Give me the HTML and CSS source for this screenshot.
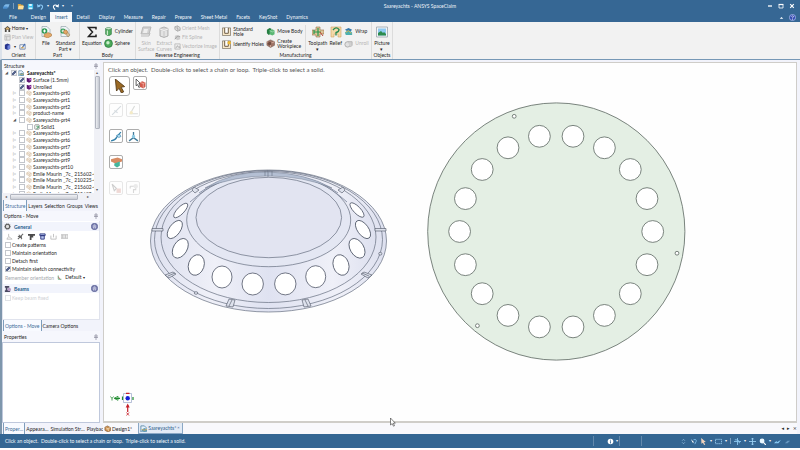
FILE: index.html
```html
<!DOCTYPE html>
<html lang="en">
<head>
<meta charset="utf-8">
<title>Saareyachts - ANSYS SpaceClaim</title>
<link rel="stylesheet" href="styles.css">
</head>
<body>
<svg class="defs" aria-hidden="true">
  <symbol id="part" viewBox="0 0 8 8"><path d="M1 2.500l2.500-1.500 3.500 2-.3 3.500L4.500 7.500 3 5.500 1 5z" fill="#f8efe4" stroke="#cdb69b" stroke-width=".7"/><path d="M1 2.500l3.500 1.700L7 3M4.500 4.200v3" fill="none" stroke="#cdb69b" stroke-width=".7"/></symbol>
  <symbol id="surface" viewBox="0 0 8 8"><path d="M1 1l3 1 3-1v5l-3 1.500L1 6z" fill="#5c1470"/><path d="M4.500 3L7 2v2L4.500 5z" fill="#c56ad0"/></symbol>
  <symbol id="solid" viewBox="0 0 8 8"><rect x="1" y="1" width="6" height="6" rx="1" fill="#fff" stroke="#666" stroke-width=".8"/><path d="M3 3h3v2H4v2" fill="none" stroke="#2d8a52"/></symbol>
  <symbol id="design" viewBox="0 0 8 8"><path d="M1 1h4l2 2v5H1z" fill="#e8f2fa" stroke="#3f7298" stroke-width=".8"/><path d="M2 5l3-1.500L8 5v2L5 8 2 7z" fill="#5d9bb7"/><path d="M2 5l3 1 3-1" stroke="#d9b25a" fill="none"/></symbol>
  <symbol id="up" viewBox="0 0 8 8"><circle cx="4" cy="4" r="3.600" fill="#8388b8" stroke="#50568c" stroke-width=".8"/><path d="M2.300 4L4 2.400 5.700 4M2.300 6L4 4.400 5.700 6" stroke="#fff" fill="none" stroke-width=".8"/></symbol>
  <symbol id="cursor" viewBox="0 0 10 12"><path d="M1 0l8 7-3.500.4L8 11l-2 1-2-4-2.500 2z"/></symbol>
</svg>

<div class="app">
  <header class="titlebar">
    <div class="caption">
      <div class="quick">
        <button aria-label="Application menu"><svg viewBox="0 0 8 8"><path d="M1 3l2-1.500h4.500L6 5H1z" fill="#7eb8e8"/><path d="M0 4h5v2.500H0z" fill="#4c91d0"/></svg></button>
        <i class="bar"></i>
        <button aria-label="Open"><svg viewBox="0 0 8 8"><path d="M1 1h3l1 1h2v5H1z" fill="#d9a441"/><path d="M2 3h6L7 7H1z" fill="#ffe09a"/></svg></button>
        <button aria-label="Save"><svg viewBox="0 0 8 8"><path d="M1 1h6v6H1z" fill="#3fc1ef"/><path d="M2.500 1h3v2.500h-3zM2 5h4v2H2z" fill="#d9f5ff"/></svg></button>
        <button aria-label="Undo"><svg viewBox="0 0 8 8"><path d="M2 3.500C4 1 7.500 3 6 5.500L4.500 7.500" stroke="#8cc9f5" stroke-width="1.300" fill="none"/><path d="M0 1l.5 4L4 4z" fill="#8cc9f5"/></svg></button>
        <small>▾</small>
        <button aria-label="Redo"><svg viewBox="0 0 8 8"><path d="M6 3.500C4 1 .5 3 2 5.500L3.500 7.500" stroke="#fff" stroke-width="1.300" fill="none"/><path d="M8 1l-.5 4L4 4z" fill="#fff"/></svg></button>
        <small>▾</small><small class="more">▾</small>
      </div>
      <h1>Saareyachts - ANSYS SpaceClaim</h1>
      <div class="winbtns">
        <button aria-label="Minimize"><svg viewBox="0 0 6 6"><path d="M1 3h4" stroke="#fff" stroke-width="1.300"/></svg></button>
        <button aria-label="Maximize"><svg viewBox="0 0 6 6"><path d="M1 1.500h4v3.500H1z" stroke="#fff" fill="none" stroke-width=".8"/><path d="M.6 1.500h4.800" stroke="#fff" stroke-width="1.200"/></svg></button>
        <button aria-label="Close"><svg viewBox="0 0 6 6"><path d="M1.200 1.200l3.600 3.600M4.800 1.200L1.200 4.800" stroke="#fff" stroke-width="1.200"/></svg></button>
      </div>
    </div>
    <nav class="tabs">
      <button class="file">File</button><button>Design</button><button class="active">Insert</button><button>Detail</button><button>Display</button><button>Measure</button><button>Repair</button><button>Prepare</button><button>Sheet Metal</button><button>Facets</button><button>KeyShot</button><button>Dynamics</button>
      <span class="help"><button aria-label="Collapse ribbon"><svg viewBox="0 0 6 6"><path d="M1.500 4L3 2.500 4.500 4z" fill="#fff"/></svg></button><button aria-label="Help"><svg viewBox="0 0 8 8"><circle cx="4" cy="4" r="3.500" fill="#3349b0" stroke="#b9c8f5" stroke-width=".8"/><path d="M2.700 3Q4 1.300 5.200 2.800 5 4 4 4.300V5M4 5.600v1" stroke="#fff" stroke-width=".8" fill="none"/></svg></button></span>
    </nav>
  </header>

  <section class="ribbon" aria-label="Insert">
    <div class="group orient">
      <div class="tools"><div class="stack">
        <button class="row"><svg viewBox="0 0 8 8"><path d="M0 4.500L4 1l4 3.500H7V8H5V5.500H3V8H1V4.500z" fill="#4c4943"/><path d="M2 4l2-1.800L6 4v1H2z" fill="#d9b16c"/></svg>Home <small>▾</small></button>
        <button class="row off" disabled><svg viewBox="0 0 8 8"><path d="M1 1h6v6H1zM1 3h6M3 3v4" fill="#e6e6e6" stroke="#bbb"/></svg>Plan View</button>
        <div class="row pair"><button aria-label="Spin"><svg viewBox="0 0 8 8"><path d="M1 2l3-1.500L7 2v4.500L4 8 1 6.500z" fill="#26348e"/><path d="M4 3l3-1v4.500L4 8z" fill="#6f85dd"/></svg></button><small>▾</small><button aria-label="Snap view"><svg viewBox="0 0 8 8"><path d="M1 2h6v5H1z" fill="#fff" stroke="#6e84a8"/><path d="M3 6l4-5" stroke="#426bb0" stroke-width="1.300"/><path d="M2 6l2-2 2 2z" fill="#d2a34b"/></svg></button></div>
      </div></div>
      <h2>Orient</h2>
    </div>
    <div class="group part">
      <div class="tools">
        <button class="big"><svg viewBox="0 0 12 12"><path d="M2 .5h5l3 3v7H2z" fill="#eef4f7" stroke="#96a5ad" stroke-width=".7"/><circle cx="4.500" cy="5" r="2.800" fill="#2f9b54"/><path d="M3 5h3M4.500 3.500v3" stroke="#fff"/><path d="M4 8.500l4-2 3.500 1.500v2L7.500 12 4 10.500z" fill="#e3a868" stroke="#a56e35" stroke-width=".5"/></svg>File</button>
        <button class="big"><svg viewBox="0 0 12 12"><path d="M2 .5h5l3 3v7H2z" fill="#eef4f7" stroke="#96a5ad" stroke-width=".7"/><circle cx="4" cy="5" r="2.600" fill="#2f9b54"/><path d="M2.600 5h2.800M4 3.600v2.800" stroke="#fff"/><path d="M5 6l2-2 4 5-2 2z" fill="#d6c19b" stroke="#977b52" stroke-width=".5"/><circle cx="6.500" cy="6" r="2" fill="#e3a868" stroke="#a56e35" stroke-width=".5"/></svg>Standard<br>Part ▾</button>
      </div>
      <h2>Part</h2>
    </div>
    <div class="group body">
      <div class="tools">
        <button class="big"><svg viewBox="0 0 12 12"><path d="M10 3.500V1.500H2.500L6.500 6l-4 4.500H10V8.500" fill="none" stroke="#222" stroke-width="1.500"/></svg>Equation</button>
        <div class="stack two">
          <button class="row"><svg viewBox="0 0 8 8"><path d="M1.500 1.500v5Q4 9 6.500 6.500v-5z" fill="#55ad61" stroke="#25743a" stroke-width=".6"/><ellipse cx="4" cy="1.500" rx="2.500" ry="1" fill="#d5f1d5" stroke="#25743a" stroke-width=".5"/><path d="M3 3v4" stroke="#d5f1d5"/></svg>Cylinder</button>
          <button class="row"><svg viewBox="0 0 8 8"><circle cx="4" cy="4" r="3.500" fill="#4ba959" stroke="#217139" stroke-width=".6"/><circle cx="3.500" cy="3.300" r="1.500" fill="#c9efcb"/></svg>Sphere</button>
        </div>
      </div>
      <h2>Body</h2>
    </div>
    <div class="group reverse">
      <div class="tools">
        <button class="big off" disabled><svg viewBox="0 0 12 12"><path d="M3 1h8l-2 7H1z" fill="#d0d0d0" stroke="#b7b7b7"/><path d="M4 3h4l-1 4H3z" fill="#eee"/><path d="M1 10h8l1-3" stroke="#bbb" fill="none"/></svg>Skin<br>Surface</button>
        <button class="big off" disabled><svg viewBox="0 0 12 12"><path d="M2 2.500L6 1l4 1.500V10L6 11.500 2 10z" fill="#d4d4d4" stroke="#b3b3b3"/><path d="M2 3l4 1.500L10 3M4 5v5M8 5v5" fill="none" stroke="#f2f2f2"/></svg>Extract<br>Curves</button>
        <div class="stack">
          <button class="row off" disabled><svg viewBox="0 0 8 8"><path d="M1 2l3-1 3 2v3L4 7 1 5z" fill="#ddd" stroke="#aaa"/><path d="M1 2l6 4M4 1v6" stroke="#aaa" stroke-width=".7"/></svg>Orient Mesh</button>
          <button class="row off" disabled><svg viewBox="0 0 8 8"><path d="M1 2l3-1 3 2v3L4 7 1 5z" fill="#ccc"/><path d="M1 6Q4 1 7 3" fill="none" stroke="#999"/></svg>Fit Spline</button>
          <button class="row off" disabled><svg viewBox="0 0 8 8"><path d="M1 1h6v6H1z" fill="#eee" stroke="#bbb"/><path d="M2 6l2-3 1 2 1-1 1 2" fill="none" stroke="#aaa"/></svg>Vectorize Image</button>
        </div>
      </div>
      <h2>Reverse Engineering</h2>
    </div>
    <div class="group manufacturing">
      <div class="tools">
        <div class="stack two wide">
          <button class="row"><svg viewBox="0 0 10 10"><path d="M.5 1h9v8.500h-9z" fill="#f7e6c6" stroke="#777064" stroke-width=".8"/><path d="M3 1v6h4V1" fill="#fff" stroke="#5d4c34"/></svg><span>Standard<br>Hole</span></button>
          <button class="row"><svg viewBox="0 0 10 10"><path d="M.5 1h9v8.500h-9z" fill="#f7e6c6" stroke="#777064" stroke-width=".8"/><path d="M3 1v6h4V1" fill="#fff" stroke="#5d4c34"/><circle cx="8" cy="3" r="2" fill="#f0ba32"/></svg>Identify Holes</button>
        </div>
        <div class="stack two wide">
          <button class="row"><svg viewBox="0 0 10 10"><path d="M1 3l3-2 2 1v5L3 9 1 7z" fill="#267e42"/><path d="M4 4l3-1.500L9.500 4v4L7 9.500 4 8z" fill="#5cb774"/><path d="M4 4l3 1.500L9.500 4" stroke="#c6edcf" fill="none" stroke-width=".6"/></svg>Move Body</button>
          <button class="row"><svg viewBox="0 0 10 10"><path d="M1 3l4-2 4.500 2v4L5 9.500 1 7z" fill="#9d7365" stroke="#62473f" stroke-width=".5"/><path d="M1 3l4 2 4.500-2M5 5v4" stroke="#dfb7a7" fill="none" stroke-width=".8"/><circle cx="4" cy="5" r="2" fill="#6f4a40"/></svg><span>Create<br>Workpiece</span></button>
        </div>
        <i class="sep"></i>
        <button class="big"><svg viewBox="0 0 12 12"><path d="M0 4h4V1h4v3h4v4H8v3H4V9H0z" fill="#e1c398" stroke="#927046" stroke-width=".6"/><path d="M2 6h7M6 2v8M2 4v4" stroke="#2a9a4b" stroke-width="1.200"/><path d="M8 6l3 4" stroke="#bb4737"/></svg>Toolpath<br>▾</button>
        <button class="big"><svg viewBox="0 0 12 12"><path d="M1 1h10v10H8V8H4v3H1z" fill="#f4d9a9" stroke="#d4a15e" stroke-width=".6"/><path d="M3 4Q6 0 9 3.500 9 6 6 6.500v3" fill="none" stroke="#288a52" stroke-width="1.300"/></svg>Relief</button>
        <div class="stack two">
          <button class="row"><svg viewBox="0 0 10 10"><path d="M1 3l4-2 4 2-3 3z" fill="#3479ad"/><path d="M1 6Q5 2 9 6v3H2z" fill="#4cb0b0"/><path d="M2 6l3-2 3 3" stroke="#e5b34b" fill="none"/></svg>Wrap</button>
          <button class="row off" disabled><svg viewBox="0 0 10 10"><circle cx="4" cy="6" r="3" fill="#e1e1e1" stroke="#aaa"/><path d="M4 3h5v4L7 9" fill="#d0d0d0" stroke="#b2b2b2"/></svg>Unroll</button>
        </div>
      </div>
      <h2>Manufacturing</h2>
    </div>
    <div class="group objects">
      <div class="tools"><button class="big"><svg viewBox="0 0 12 12"><path d="M.5 1h11v10H.5z" fill="#f5f5f5" stroke="#9ba5ad" stroke-width=".8"/><path d="M2 2.500h8v7H2z" fill="#8fcaf2"/><path d="M2 9.500V7l3-2 2 2 1-1 2 2v1.500z" fill="#2c8b4d"/></svg>Picture<br>▾</button></div>
      <h2>Objects</h2>
    </div>
  </section>

  <main class="workspace">
    <aside class="side">
      <section class="panel structure">
        <h3>Structure <svg viewBox="0 0 4 6"><path d="M1 1h2v2H1zM0 3.500h4M2 4v2" stroke="#889" stroke-width=".7" fill="none"/></svg></h3>
        <div class="treebox">
          <ul class="tree">
            <li class="root"><i>◢</i><label><input type="checkbox" checked><svg><use href="#design"/></svg><b>Saareyachts*</b></label></li>
            <li><i></i><label><input type="checkbox" checked><svg><use href="#surface"/></svg>Surface (1.5mm)</label></li>
            <li><i></i><label><input type="checkbox" checked><svg><use href="#surface"/></svg>Unrolled</label></li>
            <li><i>▷</i><label><input type="checkbox"><svg><use href="#part"/></svg>Saareyachts-prt0</label></li>
            <li><i>▷</i><label><input type="checkbox"><svg><use href="#part"/></svg>Saareyachts-prt1</label></li>
            <li><i>▷</i><label><input type="checkbox"><svg><use href="#part"/></svg>Saareyachts-prt2</label></li>
            <li><i>▷</i><label><input type="checkbox"><svg><use href="#part"/></svg>product-name</label></li>
            <li><i>◢</i><label><input type="checkbox"><svg><use href="#part"/></svg>Saareyachts-prt4</label></li>
            <li class="child"><i></i><label><input type="checkbox"><svg><use href="#solid"/></svg>Solid1</label></li>
            <li><i>▷</i><label><input type="checkbox"><svg><use href="#part"/></svg>Saareyachts-prt5</label></li>
            <li><i>▷</i><label><input type="checkbox"><svg><use href="#part"/></svg>Saareyachts-prt6</label></li>
            <li><i>▷</i><label><input type="checkbox"><svg><use href="#part"/></svg>Saareyachts-prt7</label></li>
            <li><i>▷</i><label><input type="checkbox"><svg><use href="#part"/></svg>Saareyachts-prt8</label></li>
            <li><i>▷</i><label><input type="checkbox"><svg><use href="#part"/></svg>Saareyachts-prt9</label></li>
            <li><i>▷</i><label><input type="checkbox"><svg><use href="#part"/></svg>Saareyachts-prt10</label></li>
            <li><i>▷</i><label><input type="checkbox"><svg><use href="#part"/></svg>Emile Maurin _7c_ 215602-4</label></li>
            <li><i>▷</i><label><input type="checkbox"><svg><use href="#part"/></svg>Emile Maurin _7c_ 210225-4</label></li>
            <li><i>▷</i><label><input type="checkbox"><svg><use href="#part"/></svg>Emile Maurin _7c_ 215602-4</label></li>
            <li><i>▷</i><label><input type="checkbox"><svg><use href="#part"/></svg>Emile Maurin _7c_ 215602-4</label></li>
          </ul>
          <div class="vscroll"><i>▴</i><b></b><i>▾</i></div>
        </div>
        <div class="hscroll"><i>◂</i><b></b><i>▸</i></div>
        <nav class="ptabs"><button class="active">Structure</button><button>Layers</button><button>Selection</button><button>Groups</button><button>Views</button></nav>
      </section>

      <section class="panel options">
        <h3>Options - Move <svg viewBox="0 0 4 6"><path d="M1 1h2v2H1zM0 3.500h4M2 4v2" stroke="#889" stroke-width=".7" fill="none"/></svg></h3>
        <div class="form">
          <h4><svg viewBox="0 0 8 8"><circle cx="4" cy="4" r="2.500" fill="#ddd" stroke="#555" stroke-width="1.200"/><circle cx="4" cy="4" r="3.400" fill="none" stroke="#777" stroke-dasharray="1 1"/></svg><span>General</span><svg><use href="#up"/></svg></h4>
          <div class="minis">
            <svg viewBox="0 0 8 8"><path d="M1 7h6L3 4zM3 4V1" fill="none" stroke="#bbb"/></svg>
            <svg viewBox="0 0 8 8"><path d="M1 7l6-6M2 2l4 4M1 4h4v3" fill="none" stroke="#666" stroke-width="1.200"/></svg>
            <svg viewBox="0 0 8 8"><path d="M0 1h8v2H6v2H4v3H2V3H0z" fill="#4b4b4b"/></svg>
            <svg viewBox="0 0 8 8"><path d="M1 1h6v2H1zM2 3h4v4H2z" fill="#b8c6f0" stroke="#29347d"/></svg>
            <svg viewBox="0 0 8 8"><path d="M1 3v4h6V3M4 1v4" fill="none" stroke="#bbb"/></svg>
            <svg viewBox="0 0 8 8"><path d="M0 2h8v4H0zM2 2v4M5 2v4" fill="#eee" stroke="#bbb"/></svg>
          </div>
          <label><input type="checkbox">Create patterns</label>
          <label><input type="checkbox">Maintain orientation</label>
          <label><input type="checkbox">Detach first</label>
          <label><input type="checkbox" checked>Maintain sketch connectivity</label>
          <div class="remember"><span class="muted">Remember orientation</span><svg viewBox="0 0 8 8"><path d="M2 0v6h5" fill="none" stroke="#268a46"/><path d="M2 2l3 4" stroke="#bb3838"/></svg><button>Default <small>▾</small></button></div>
          <h4><svg viewBox="0 0 8 8"><path d="M1 1h5v2H4v3h3v2H1V6h1V3H1z" fill="#4c4a62"/><circle cx="6" cy="5" r="2" fill="#b79bc8"/></svg><span>Beams</span><svg><use href="#up"/></svg></h4>
          <label class="faint"><input type="checkbox" disabled>Keep beam fixed</label>
        </div>
        <nav class="ptabs"><button class="active">Options - Move</button><button>Camera Options</button></nav>
      </section>

      <section class="panel props">
        <h3>Properties <svg viewBox="0 0 4 6"><path d="M1 1h2v2H1zM0 3.500h4M2 4v2" stroke="#889" stroke-width=".7" fill="none"/></svg></h3>
        <div class="empty"></div>
        <nav class="ptabs"><button class="active">Proper…</button><button>Appeara…</button><button>Simulation Str…</button><button>Playback</button></nav>
      </section>
    </aside>

    <section class="document">
      <div class="canvas">
        <svg class="model" viewBox="104 63 692 358" preserveAspectRatio="xMinYMin meet" role="img" aria-label="Dish and its unrolled pattern">
          <defs><linearGradient id="shade"><stop offset="0" stop-color="#dfe2f0"/><stop offset=".25" stop-color="#eff0f8"/><stop offset=".5" stop-color="#dfe2f1"/><stop offset=".8" stop-color="#eff0f8"/><stop offset="1" stop-color="#dde0ef"/></linearGradient></defs>
          <g stroke="#666e80" stroke-width=".7" fill="none">
            <ellipse cx="268.500" cy="241" rx="118" ry="71" fill="url(#shade)"/>
            <ellipse cx="268.500" cy="239.500" rx="114" ry="69"/>
            <ellipse cx="268.500" cy="237" rx="107.500" ry="65.500" fill="url(#shade)"/>
            <path d="M190 202Q220 174 268.500 174T347 202M199 193Q232 170 268.500 178 305 170 338 193" stroke-width=".7" stroke="#65718b"/>
            <ellipse cx="268.700" cy="220" rx="82" ry="46.700" fill="#e4e7f3"/>
            <path d="M205 188Q232 171 268.500 172T332 188Q303 176 268.500 176T205 188z" fill="#b4bfd3" stroke-width=".4"/>
            <ellipse cx="268.800" cy="217.500" rx="72.800" ry="40.200" fill="#e2e4f1"/>
            <path d="M265 171v5M268 170v7M272 171v5" stroke-width=".6"/>
          </g>
          <g fill="#fff" stroke="#4f5667" stroke-width=".8">
            <ellipse cx="180.700" cy="210.500" rx="9.500" ry="3.500" transform="rotate(-46 180.700 210.500)"/>
            <ellipse cx="174.800" cy="229.500" rx="10.500" ry="5.500" transform="rotate(-54 174.800 229.500)"/>
            <ellipse cx="180.300" cy="248.300" rx="10.700" ry="6.800" transform="rotate(-59 180.300 248.300)"/>
            <ellipse cx="196.300" cy="265" rx="7.800" ry="10.500" transform="rotate(18 196.300 265)"/>
            <ellipse cx="222" cy="277" rx="10" ry="11"/>
            <ellipse cx="252.700" cy="284" rx="10.700" ry="11"/>
            <ellipse cx="285.300" cy="283.900" rx="10.700" ry="11"/>
            <ellipse cx="315.700" cy="276.700" rx="10" ry="11"/>
            <ellipse cx="341" cy="265" rx="7.800" ry="10.500" transform="rotate(-18 341 265)"/>
            <ellipse cx="357" cy="248.300" rx="10.700" ry="6.800" transform="rotate(59 357 248.300)"/>
            <ellipse cx="363" cy="229.500" rx="10.500" ry="5.500" transform="rotate(54 363 229.500)"/>
            <ellipse cx="357" cy="210" rx="9.500" ry="3.500" transform="rotate(46 357 210)"/>
          </g>
          <g fill="#dde1ec" stroke="#4c5362" stroke-width=".6">
            <path d="M192 190l2-3 5 3-4 3z"/><path d="M345 190l-2-3-5 3 4 3z"/>
            <path d="M152 228.500h11v2.500h-11z"/><path d="M375 228.500h11v2.500h-11z"/>
            <path d="M165 275l8-3 3 2-7 4zM168 276l7-3"/><path d="M372 275l-8-3-3 2 7 4zM369 276l-7-3"/>
            <path d="M226 306l3-7 6 1-2 7zM229 306l3-6"/><path d="M311 306l-3-7-6 1 2 7zM308 306l-3-6"/>
            <ellipse cx="196" cy="293" rx="1.800" ry="1.300"/><ellipse cx="380.300" cy="253.700" rx="1.600" ry="1.400"/>
          </g>
          <g fill="#fff" stroke="#5b6660" stroke-width=".8">
            <circle cx="556.300" cy="231.500" r="128.600" fill="#e4efe4"/>
            <circle cx="652.700" cy="231.500" r="10.900"/><circle cx="647" cy="198.600" r="10.900"/><circle cx="630.300" cy="169.500" r="10.900"/><circle cx="604.400" cy="147.800" r="10.900"/><circle cx="573" cy="136.300" r="10.900"/>
            <circle cx="539.400" cy="136.300" r="10.900"/><circle cx="508" cy="147.800" r="10.900"/><circle cx="482.200" cy="169.500" r="10.900"/><circle cx="465.400" cy="198.600" r="10.900"/><circle cx="459.600" cy="231.500" r="10.900"/>
            <circle cx="465.400" cy="264.700" r="10.900"/><circle cx="482.200" cy="293.700" r="10.900"/><circle cx="508" cy="315.400" r="10.900"/><circle cx="539.400" cy="326.900" r="10.900"/>
            <circle cx="573" cy="326.900" r="10.900"/><circle cx="604.400" cy="315.400" r="10.900"/><circle cx="630.300" cy="293.700" r="10.900"/><circle cx="647" cy="264.700" r="10.900"/>
            <circle cx="514.200" cy="116.300" r="1.900"/><circle cx="677" cy="253.200" r="1.900"/><circle cx="477.400" cy="325.700" r="1.900"/>
          </g>
          <g fill="none"><path d="M123.500 393.500h8v9h-8z" stroke="#9aa6c8" stroke-width=".7"/><circle cx="127.700" cy="398.300" r="2.200" fill="#1420d8"/><path d="M115 398.300h5M122.500 396.500v3.500M133 397v3" stroke="#1f8a2e" stroke-width="1.200"/><path d="M114 398.300l4-2v4zM110.500 396.500l1.500 2 1.500-2M112 398.500v2" stroke="#1f8a2e" stroke-width=".8"/><path d="M127.700 405v7M126 393.300h3.500" stroke="#c6202a" stroke-width="1.200"/><path d="M127.700 403.500l-2 4h4z" fill="#c6202a"/><path d="M126.500 412.500l2.500 3M129 412.500l-2.500 3" stroke="#c6202a" stroke-width=".8"/></g>
          <path d="M390.500 418v7l1.700-1.400 1.300 2.600 1-.5-1.200-2.500h2z" fill="#fff" stroke="#333" stroke-width=".6"/>
        </svg>
        <p class="hint">Click an object.&nbsp; Double-click to select a chain or loop.&nbsp; Triple-click to select a solid.</p>
        <div class="guides">
          <div><button class="large" aria-label="Select"><svg viewBox="0 0 10 12"><path d="M1 0l8 6.500-3 .6L8.200 11l-2 1-2-4L2 10.300z" fill="#9b6a25" stroke="#4e3514" stroke-width=".7"/></svg></button><button aria-label="Select component"><svg viewBox="0 0 10 10"><path d="M1 1l4 4H3.500L5 8 3.500 8.500 2.500 6 1 7z" fill="#fff" stroke="#333" stroke-width=".7"/><path d="M4.500 4l2-1 3 1v4l-2 1.500-3-1.500z" fill="#d1584a"/><path d="M4.500 4l3 1 2-1M7.500 5v4" stroke="#f7c8be" fill="none" stroke-width=".6"/></svg></button></div>
          <div class="faded"><button aria-label="Move direction" disabled><svg viewBox="0 0 10 10"><path d="M1 9l8-8M3 5l3 2" stroke="#6c8291"/></svg></button><button aria-label="Move along" disabled><svg viewBox="0 0 10 10"><path d="M6 1L2 8h7" fill="none" stroke="#7b837b"/><circle cx="3" cy="7" r="1.500" fill="#dbba38"/></svg></button></div>
          <div><button aria-label="Move along trajectory"><svg viewBox="0 0 10 10"><path d="M0 9Q4 8 5 6t4-5" fill="none" stroke="#3480a9" stroke-width="1.200"/><path d="M5 4l3-1 1 2-2 1z" fill="#b5dff5" stroke="#3480a9" stroke-width=".6"/></svg></button><button aria-label="Anchor"><svg viewBox="0 0 10 10"><path d="M5 1v5L1 9M5 6l4 3" fill="none" stroke="#427c9b" stroke-width="1.200"/><circle cx="5" cy="5" r="1.500" fill="#8ecae4"/></svg></button></div>
          <div><button aria-label="Up to"><svg viewBox="0 0 10 10"><path d="M0 2l6-1.500L10 2v2L4 6 0 4z" fill="#d78b63"/><path d="M3 6l5-2v4L5.500 9.500 3 8z" fill="#45b69d"/></svg></button></div>
          <div class="faded"><button aria-label="Fulcrum" disabled><svg viewBox="0 0 10 10"><path d="M1 1l4 4-2 2z" stroke="#555" fill="none"/><path d="M5 5h4v4H5z" fill="#cb7d73"/></svg></button><button aria-label="Detach" disabled><svg viewBox="0 0 10 10"><path d="M2 3h5v3H5v3M2 3v2" stroke="#777" fill="none"/><circle cx="7" cy="3" r="2" fill="#bbb"/></svg></button></div>
        </div>
      </div>
      <nav class="doctabs"><button><svg viewBox="0 0 8 8"><path d="M1 2.500L4 1l3.500 2v3.500L4.500 8 1 6z" fill="#c98d4e" stroke="#754b24" stroke-width=".6"/><path d="M2 3l3 2v2M3 5l4-2" stroke="#fff0d3" fill="none" stroke-width=".7"/></svg>Design1*</button><button class="active"><svg><use href="#design"/></svg>Saareyachts* <small>×</small></button><span>◂&nbsp; ▸&nbsp; ×</span></nav>
    </section>
  </main>

  <footer class="status">
    <p>Click an object.&nbsp; Double-click to select a chain or loop.&nbsp; Triple-click to select a solid.</p>
    <div class="info"><button aria-label="Messages"><svg viewBox="0 0 8 8"><circle cx="4" cy="4" r="3.200" fill="#fff"/><path d="M4 2v1M4 3.700v2.500" stroke="#346693"/></svg></button><small>▾</small></div>
    <div class="cell"></div>
    <div class="view">
      <svg viewBox="0 0 8 8"><path d="M2.500 3L4 1.500 5.500 3M2.500 5L4 6.500 5.500 5" stroke="#8eb9dc" fill="none"/></svg>
      <svg viewBox="0 0 8 8"><path d="M1 1l4 4H3l1 2.500z" fill="#fff"/><path d="M4 2Q8 1 7 4L5.500 7" stroke="#83c2ee" fill="none"/></svg>
      <svg class="tan"><use href="#cursor"/></svg><small>▾</small>
      <svg viewBox="0 0 8 8"><path d="M.5 1.500h7v5h-7z" fill="none" stroke="#9bd0f4" stroke-dasharray="1.500 .7"/></svg><small>▾</small>
      <i class="bar"></i>
      <svg viewBox="0 0 8 8"><path d="M4 0v8M0 4h8M1 2q6 0 5 4" fill="none" stroke="#8cc8f1"/></svg><small>▾</small>
      <svg viewBox="0 0 8 8"><path d="M4 0v8M0 4h8M2.800 1.500L4 0l1.200 1.500M2.800 6.500L4 8l1.200-1.500" fill="none" stroke="#9bd0f4"/></svg>
      <svg viewBox="0 0 8 8"><circle cx="3.500" cy="3.500" r="2.800" fill="#e9f7ff"/><path d="M5 5l3 3" stroke="#fff" stroke-width="1.400"/></svg><small>▾</small>
      <svg viewBox="0 0 8 8"><path d="M0 6l3-3v2l5-3-3 4H3z" fill="#8ed0fa"/></svg>
      <svg viewBox="0 0 8 8"><path d="M1 6l3-3h3L4 6z" fill="#6697c0"/></svg>
    </div>
  </footer>
</div>
</body>
</html>
```
FILE: styles.css
```css
* { box-sizing: border-box; }
html, body { height: 100%; margin: 0; }
body { font: 5px/6px Lato, "Liberation Sans", sans-serif; color: #1f1f1f; background: #fff; }
h1, h2, h3, h4, p, ul { margin: 0; padding: 0; font-size: 5px; font-weight: 400; }
ul { list-style: none; }
i { font-style: normal; }
small { font-size: 4px; }
button { font: inherit; color: inherit; background: none; border: 0; padding: 0; margin: 0; white-space: nowrap; }
svg { display: block; width: 7px; height: 7px; flex: none; }
.defs { position: absolute; width: 0; height: 0; }
input[type="checkbox"] { appearance: none; width: 6px; height: 6px; margin: 0; border: 1px solid #c3c6cc; background: #fff; flex: none; }
input[type="checkbox"]:checked { background: linear-gradient(135deg, #e8ebf2 35%, #56648c 36% 64%, #e8ebf2 65%); }

.app { display: flex; flex-direction: column; height: 100%; padding-bottom: 2px; }

/* Title bar */
.titlebar { background: #366794; color: #f2f6fa; }
.caption { display: grid; grid-template-columns: 10fr auto 9fr; align-items: center; height: 12px; padding: 0 5px 0 3px; }
.caption h1 { padding-left: 4px; }
.quick { display: flex; align-items: center; gap: 3px; }
.quick .more { margin-left: 4px; color: #a9c4dc; }
.bar { width: 1px; height: 6px; background: #7a9dbd; }
.winbtns { display: flex; justify-content: flex-end; gap: 5px; }
.winbtns svg { width: 6px; height: 6px; }
.tabs { display: flex; height: 10px; padding-left: 4px; }
.tabs > button { padding: 0 4px 0 5px; }
.tabs .file { margin-right: 5px; }
.tabs .active { background: #f7f8fa; color: #2c5c8a; }
.help { display: flex; gap: 4px; align-items: center; margin-left: auto; padding-right: 4px; }

/* Ribbon */
.ribbon { display: flex; height: 38px; background: #f2f2f2; border-bottom: 1px solid #7698b6; border-left: 2px solid #dbe2ea; flex: none; }
.group { display: flex; flex-direction: column; padding-top: 3px; border-right: 1px solid #dcdcdc; }
.tools { display: flex; flex: 1; justify-content: space-evenly; }
.group h2 { height: 7px; text-align: center; line-height: 6px; }
.orient { width: 34px; }
.part { width: 44px; }
.body { width: 56px; }
.reverse { width: 84px; }
.manufacturing { width: 152px; }
.objects { width: 21px; }
.big { display: block; line-height: 6px; text-align: center; align-self: flex-start; }
.big svg { width: 12px; height: 12px; margin: 1px auto 2px; }
.off { color: #b5b5b5; }
.stack { display: flex; flex-direction: column; justify-content: space-between; padding-bottom: 2px; }
.stack.two { justify-content: space-around; }
.row { display: flex; align-items: center; gap: 1px; min-height: 7px; text-align: left; line-height: 5px; }
.two svg { width: 9px; height: 9px; }
.two .row { gap: 2px; }
.pair { gap: 3px; }
.sep { width: 1px; background: #dcdcdc; }

/* Workspace */
.workspace { display: flex; flex: 1; min-height: 0; background: #f2f3fb; }
.side { display: flex; flex-direction: column; width: 101px; border-left: 2px solid #7e96ac; padding-top: 1px; flex: none; }
.panel { display: flex; flex-direction: column; padding-right: 1px; }
.panel h3 { display: flex; justify-content: space-between; align-items: center; height: 9px; padding: 0 2px; background: #f6f7fd; flex: none; }
.panel h3 svg { width: 4px; height: 6px; }
.treebox { display: flex; height: 123px; overflow: hidden; background: #fff; border-left: 1px solid #dfe2ec; }
.tree { display: grid; grid-auto-rows: 1fr; height: 127px; flex: 1; min-width: 0; padding-left: 10px; overflow: hidden; }
.tree li, .tree label { display: flex; align-items: center; white-space: nowrap; line-height: 6px; }
.tree i { width: 6px; font: 4px/6px "DejaVu Sans", sans-serif; color: #555; }
.tree label { gap: 1px; }
.tree .root { margin-left: -8px; }
.tree .child { margin-left: 8px; }
.tree b { margin-left: 2px; color: #111; }
.tree svg { width: 6px; height: 6px; }
.vscroll, .hscroll { display: flex; background: #f0f1f6; color: #555; align-items: center; font: 4px/6px "DejaVu Sans", sans-serif; }
.vscroll { flex-direction: column; width: 6px; }
.vscroll b { flex: 1; width: 5px; margin-bottom: 58px; background: linear-gradient(90deg, #eceef2, #c3c7d0); border: 1px solid #b1b5bf; border-radius: 1px; }
.hscroll { height: 7px; padding: 0 3px; gap: 3px; }
.hscroll b { width: 68px; height: 6px; background: linear-gradient(#f0f1f5, #c9ccd4); border: 1px solid #b1b5bf; border-radius: 1px; }
.hscroll i:last-child { margin-left: 6px; }
.ptabs { display: flex; align-items: stretch; gap: 2px; height: 11px; padding: 0 1px; background: #f2f3fb; flex: none; }
.ptabs button { padding: 0; }
.ptabs .active { color: #3e6c98; background: #f8faff; border: solid #7e9dbb; border-width: 0 1px; padding: 0 1px; margin-right: -1px; }
.form { height: 99px; padding-top: 1px; background: #fff; border: 1px solid #e0e3ed; border-top: 0; }
.form h4 { display: flex; align-items: center; gap: 3px; height: 9px; margin-bottom: 1px; padding: 0 1px; background: #f2f4fc; color: #235b8c; font-weight: 700; }
.form h4 span { flex: 1; }
.form label { display: flex; align-items: center; gap: 1px; height: 8px; padding-left: 2px; }
.minis { display: flex; gap: 4px; height: 9px; padding-left: 3px; align-items: center; }
.minis svg { width: 7px; height: 7px; }
.remember { display: flex; align-items: center; gap: 3px; height: 9px; margin-bottom: 2px; padding-left: 2px; }
.remember svg { width: 5px; height: 6px; }
.muted { color: #a5a8ad; }
.faint { color: #cfd1d5; }
.faint input[type="checkbox"] { border-color: #e0e2e6; }
.panel.options h3 { height: 10px; }
.props { flex: 1; min-height: 0; }
.panel.props h3 { height: 11px; }
.empty { flex: 1; background: #fff; border: 1px solid #bfc8dc; }

/* Document area */
.document { display: flex; flex: 1; flex-direction: column; min-width: 0; padding: 2px 3px 0 2px; }
.canvas { position: relative; flex: 1; min-height: 0; background: #fefefe; border: 1px solid #cfcdc9; border-bottom-width: 2px; }
.model { width: 100%; height: 100%; overflow: visible; }
.hint { position: absolute; left: 4px; top: 3px; font-size: 6px; line-height: 7px; color: #555; white-space: nowrap; }
.guides { position: absolute; left: 5px; top: 13px; display: grid; grid-template-rows: 26px; grid-auto-rows: 26px; }
.guides > div { display: flex; gap: 3px; align-items: flex-start; }
.guides > div:not(:first-child) { padding-top: 1px; }
.guides button { display: grid; place-items: center; width: 14px; height: 14px; background: #fff; border: 1px solid #adadad; border-radius: 2px; }
.guides button svg { width: 11px; height: 11px; }
.guides .large { width: 21px; height: 20px; border-radius: 3px; }
.guides .large svg { width: 14px; height: 14px; }
.guides .faded { opacity: .28; }
.doctabs { display: flex; height: 11px; align-items: stretch; gap: 4px; background: #f8f8fc; flex: none; }
.doctabs button { display: flex; align-items: center; gap: 1px; padding: 0 2px 0 1px; }
.doctabs .active { background: #e3ebf6; border: 1px solid #8ba8c5; border-top: 0; color: #2c5c8a; }
.doctabs span { margin-left: auto; line-height: 10px; font-family: "DejaVu Sans", sans-serif; }

/* Status bar */
.status { display: flex; align-items: center; height: 14px; background: #346693; color: #f3f7fb; padding: 0 9px 0 5px; flex: none; }
.status p { flex: 1; white-space: nowrap; }
.info, .cell, .view { display: flex; align-items: center; height: 10px; }
.info { width: 27px; justify-content: flex-end; gap: 2px; padding-right: 1px; border: solid #6389ad; border-width: 0 1px; }
.cell { width: 22px; border-right: 1px solid #6389ad; }
.view { gap: 3px; padding-left: 38px; }
.tan { fill: #f1d3bd; }
```
